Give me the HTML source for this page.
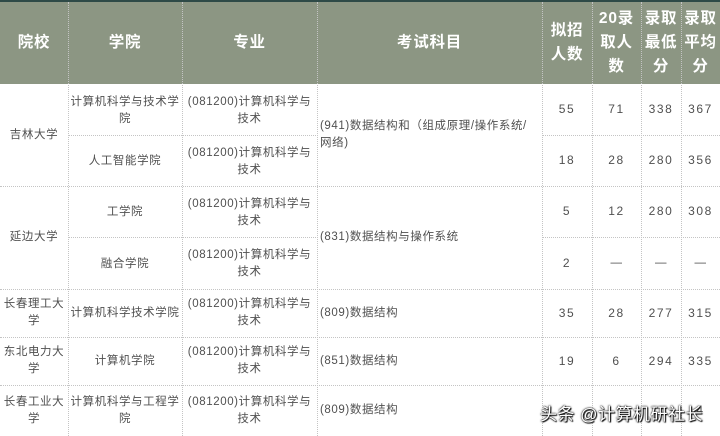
<!DOCTYPE html><html><head><meta charset="utf-8"><style>
body{margin:0;width:720px;height:436px;overflow:hidden;background:#fff;font-family:"Liberation Sans","Noto Sans CJK SC",sans-serif;position:relative}
.c{position:absolute;display:flex;align-items:center;justify-content:center;text-align:center;box-sizing:border-box;font-size:11.5px;line-height:17px;color:#505050;letter-spacing:0.6px}
.n{letter-spacing:1.6px;font-size:12px}
.h{color:#fff;font-weight:bold;font-size:15.5px;line-height:24px;letter-spacing:0.8px}
.l{justify-content:flex-start;text-align:left;padding-left:3px}
.vl{position:absolute;border-left:1px dotted #c4c4c4;width:0}
.hl{position:absolute;border-top:1px dotted #c4c4c4;height:0}
</style></head><body>
<div style="position:absolute;left:0;top:0;width:720px;height:2px;background:#2e4a47"></div>
<div style="position:absolute;left:0;top:2px;width:720px;height:82px;background:#8c9683"></div>
<div class="vl" style="left:68px;top:2px;height:434px"></div>
<div class="vl" style="left:182px;top:2px;height:434px"></div>
<div class="vl" style="left:317px;top:2px;height:434px"></div>
<div class="vl" style="left:542px;top:2px;height:434px"></div>
<div class="vl" style="left:592px;top:2px;height:434px"></div>
<div class="vl" style="left:641px;top:2px;height:434px"></div>
<div class="vl" style="left:681px;top:2px;height:434px"></div>
<div class="hl" style="left:68px;top:135px;width:250px"></div>
<div class="hl" style="left:542px;top:135px;width:178px"></div>
<div class="hl" style="left:0;top:186px;width:720px"></div>
<div class="hl" style="left:68px;top:237px;width:250px"></div>
<div class="hl" style="left:542px;top:237px;width:178px"></div>
<div class="hl" style="left:0;top:289px;width:720px"></div>
<div class="hl" style="left:0;top:337px;width:720px"></div>
<div class="hl" style="left:0;top:385px;width:720px"></div>

<div class="c h" style="left:0;top:2px;width:68px;height:82px">院校</div>
<div class="c h" style="left:68px;top:2px;width:114px;height:82px">学院</div>
<div class="c h" style="left:182px;top:2px;width:135px;height:82px">专业</div>
<div class="c h" style="left:317px;top:2px;width:225px;height:82px">考试科目</div>
<div class="c h" style="left:542px;top:2px;width:50px;height:82px">拟招<br>人数</div>
<div class="c h" style="left:592px;top:2px;width:49px;height:82px">20录<br>取人<br>数</div>
<div class="c h" style="left:641px;top:2px;width:40px;height:82px">录取<br>最低<br>分</div>
<div class="c h" style="left:681px;top:2px;width:39px;height:82px">录取<br>平均<br>分</div>

<div class="c" style="left:0;top:84px;width:68px;height:102px">吉林大学</div>
<div class="c" style="left:0;top:186px;width:68px;height:103px">延边大学</div>
<div class="c" style="left:0;top:289px;width:68px;height:48px">长春理工大<br>学</div>
<div class="c" style="left:0;top:337px;width:68px;height:48px">东北电力大<br>学</div>
<div class="c" style="left:0;top:385px;width:68px;height:51px">长春工业大<br>学</div>

<div class="c" style="left:68px;top:85px;width:114px;height:51px">计算机科学与技术学<br>院</div>
<div class="c" style="left:68px;top:136px;width:114px;height:51px">人工智能学院</div>
<div class="c" style="left:68px;top:187px;width:114px;height:51px">工学院</div>
<div class="c" style="left:68px;top:238px;width:114px;height:52px">融合学院</div>
<div class="c" style="left:68px;top:289px;width:114px;height:48px">计算机科学技术学院</div>
<div class="c" style="left:68px;top:337px;width:114px;height:48px">计算机学院</div>
<div class="c" style="left:68px;top:385px;width:114px;height:51px">计算机科学与工程学<br>院</div>

<div class="c" style="left:182px;top:85px;width:135px;height:51px">(081200)计算机科学与<br>技术</div>
<div class="c" style="left:182px;top:136px;width:135px;height:51px">(081200)计算机科学与<br>技术</div>
<div class="c" style="left:182px;top:187px;width:135px;height:51px">(081200)计算机科学与<br>技术</div>
<div class="c" style="left:182px;top:238px;width:135px;height:52px">(081200)计算机科学与<br>技术</div>
<div class="c" style="left:182px;top:289px;width:135px;height:48px">(081200)计算机科学与<br>技术</div>
<div class="c" style="left:182px;top:337px;width:135px;height:48px">(081200)计算机科学与<br>技术</div>
<div class="c" style="left:182px;top:385px;width:135px;height:51px">(081200)计算机科学与<br>技术</div>

<div class="c l" style="left:317px;top:84px;width:225px;height:102px">(941)数据结构和（组成原理/操作系统/<br>网络)</div>
<div class="c l" style="left:317px;top:186px;width:225px;height:103px">(831)数据结构与操作系统</div>
<div class="c l" style="left:317px;top:289px;width:225px;height:48px">(809)数据结构</div>
<div class="c l" style="left:317px;top:337px;width:225px;height:48px">(851)数据结构</div>
<div class="c l" style="left:317px;top:385px;width:225px;height:51px">(809)数据结构</div>

<div class="c n" style="left:542px;top:84px;width:50px;height:51px">55</div>
<div class="c n" style="left:592px;top:84px;width:49px;height:51px">71</div>
<div class="c n" style="left:641px;top:84px;width:40px;height:51px">338</div>
<div class="c n" style="left:681px;top:84px;width:39px;height:51px">367</div>
<div class="c n" style="left:542px;top:135px;width:50px;height:51px">18</div>
<div class="c n" style="left:592px;top:135px;width:49px;height:51px">28</div>
<div class="c n" style="left:641px;top:135px;width:40px;height:51px">280</div>
<div class="c n" style="left:681px;top:135px;width:39px;height:51px">356</div>
<div class="c n" style="left:542px;top:186px;width:50px;height:51px">5</div>
<div class="c n" style="left:592px;top:186px;width:49px;height:51px">12</div>
<div class="c n" style="left:641px;top:186px;width:40px;height:51px">280</div>
<div class="c n" style="left:681px;top:186px;width:39px;height:51px">308</div>
<div class="c n" style="left:542px;top:237px;width:50px;height:52px">2</div>
<div class="c" style="left:592px;top:237px;width:49px;height:52px">—</div>
<div class="c" style="left:641px;top:237px;width:40px;height:52px">—</div>
<div class="c" style="left:681px;top:237px;width:39px;height:52px">—</div>
<div class="c n" style="left:542px;top:289px;width:50px;height:48px">35</div>
<div class="c n" style="left:592px;top:289px;width:49px;height:48px">28</div>
<div class="c n" style="left:641px;top:289px;width:40px;height:48px">277</div>
<div class="c n" style="left:681px;top:289px;width:39px;height:48px">315</div>
<div class="c n" style="left:542px;top:337px;width:50px;height:48px">19</div>
<div class="c n" style="left:592px;top:337px;width:49px;height:48px">6</div>
<div class="c n" style="left:641px;top:337px;width:40px;height:48px">294</div>
<div class="c n" style="left:681px;top:337px;width:39px;height:48px">335</div>
<div class="c n" style="left:681px;top:385px;width:39px;height:51px">4</div>
<div style="position:absolute;left:540px;top:400px;font-size:17px;letter-spacing:0.5px;color:#fff;font-family:'Liberation Sans','Noto Sans CJK SC',sans-serif;text-shadow:0 0 2px #000,0 0 1px #000,1px 1px 1px #000">头条 @计算机研社长</div>
</body></html>
